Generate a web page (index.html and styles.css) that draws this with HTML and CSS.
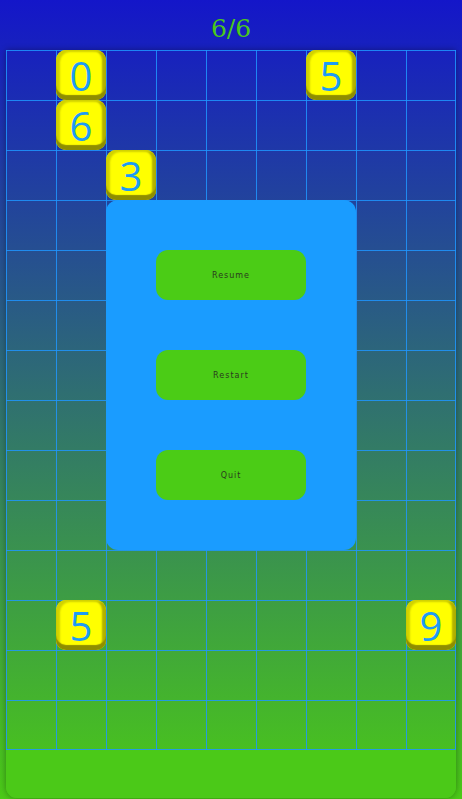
FILE: index.html
```html
<!DOCTYPE html>
<html>
<head>
<meta charset="utf-8">
<link rel="stylesheet" href="styles.css">
</head>
<body>
<div class="app">
  <header class="header"><span class="score">6/6</span></header>
  <main class="frame">
    <div class="board">
      <div class="tile" style="grid-area: 1 / 2">0</div>
      <div class="tile" style="grid-area: 1 / 7">5</div>
      <div class="tile" style="grid-area: 2 / 2">6</div>
      <div class="tile" style="grid-area: 3 / 3">3</div>
      <div class="tile" style="grid-area: 12 / 2">5</div>
      <div class="tile" style="grid-area: 12 / 9">9</div>
      <div class="menu">
        <button class="btn">Resume</button>
        <button class="btn">Restart</button>
        <button class="btn">Quit</button>
      </div>
    </div>
    <div class="footer"></div>
  </main>
</div>
</body>
</html>
```
FILE: styles.css
```css
html, body {
  margin: 0;
  padding: 0;
}
body {
  width: 462px;
  height: 799px;
  overflow: hidden;
  background: linear-gradient(to bottom, #1416c9 0%, #4bca17 100%);
  font-family: "DejaVu Sans", sans-serif;
}
.app {
  display: flex;
  flex-direction: column;
  height: 799px;
}
.header {
  height: 50px;
  display: flex;
  align-items: center;
  justify-content: center;
}
.score {
  font-family: "DejaVu Serif", serif;
  font-size: 25px;
  color: #4ac81a;
  padding-top: 6px;
}
.frame {
  width: 450px;
  margin: 0 6px;
  border-radius: 0 0 11px 11px;
  box-shadow: 0 0 6px rgba(0, 0, 0, 0.35);
  display: flex;
  flex-direction: column;
}
.board {
  position: relative;
  display: grid;
  grid-template-columns: repeat(9, 50px);
  grid-template-rows: repeat(14, 50px);
  background-image:
    linear-gradient(to right, rgba(30, 150, 255, 0.85) 1px, transparent 1px),
    linear-gradient(to bottom, rgba(30, 150, 255, 0.85) 1px, transparent 1px);
  background-size: 50px 50px;
  box-shadow: inset -1px -1px 0 rgba(30, 150, 255, 0.85);
}
.tile {
  box-sizing: border-box;
  width: 50px;
  height: 50px;
  border-radius: 10px;
  background: #ffff00;
  box-shadow:
    inset 0 -5px 1px #8e8e00,
    inset 4px 2px 2px #d2d200,
    inset -4px 0 2px #b0b000;
  color: #1d9bf6;
  font-family: "Open Sans", sans-serif;
  font-size: 40px;
  font-weight: 380;
  line-height: 52px;
  text-align: center;
}
.menu {
  position: absolute;
  left: 100px;
  top: 150px;
  width: 250px;
  height: 350px;
  box-sizing: border-box;
  padding: 50px;
  background: #1a9cff;
  border-radius: 12px;
  display: flex;
  flex-direction: column;
  gap: 50px;
}
.btn {
  height: 50px;
  border: none;
  border-radius: 12px;
  background: #4bcc16;
  color: #2a3b1f;
  font-family: "DejaVu Sans", sans-serif;
  font-size: 8px;
  letter-spacing: 1px;
  padding: 0;
  margin: 0;
}
.footer {
  height: 48px;
  background: #4bc918;
  border-radius: 0 0 11px 11px;
}
```
